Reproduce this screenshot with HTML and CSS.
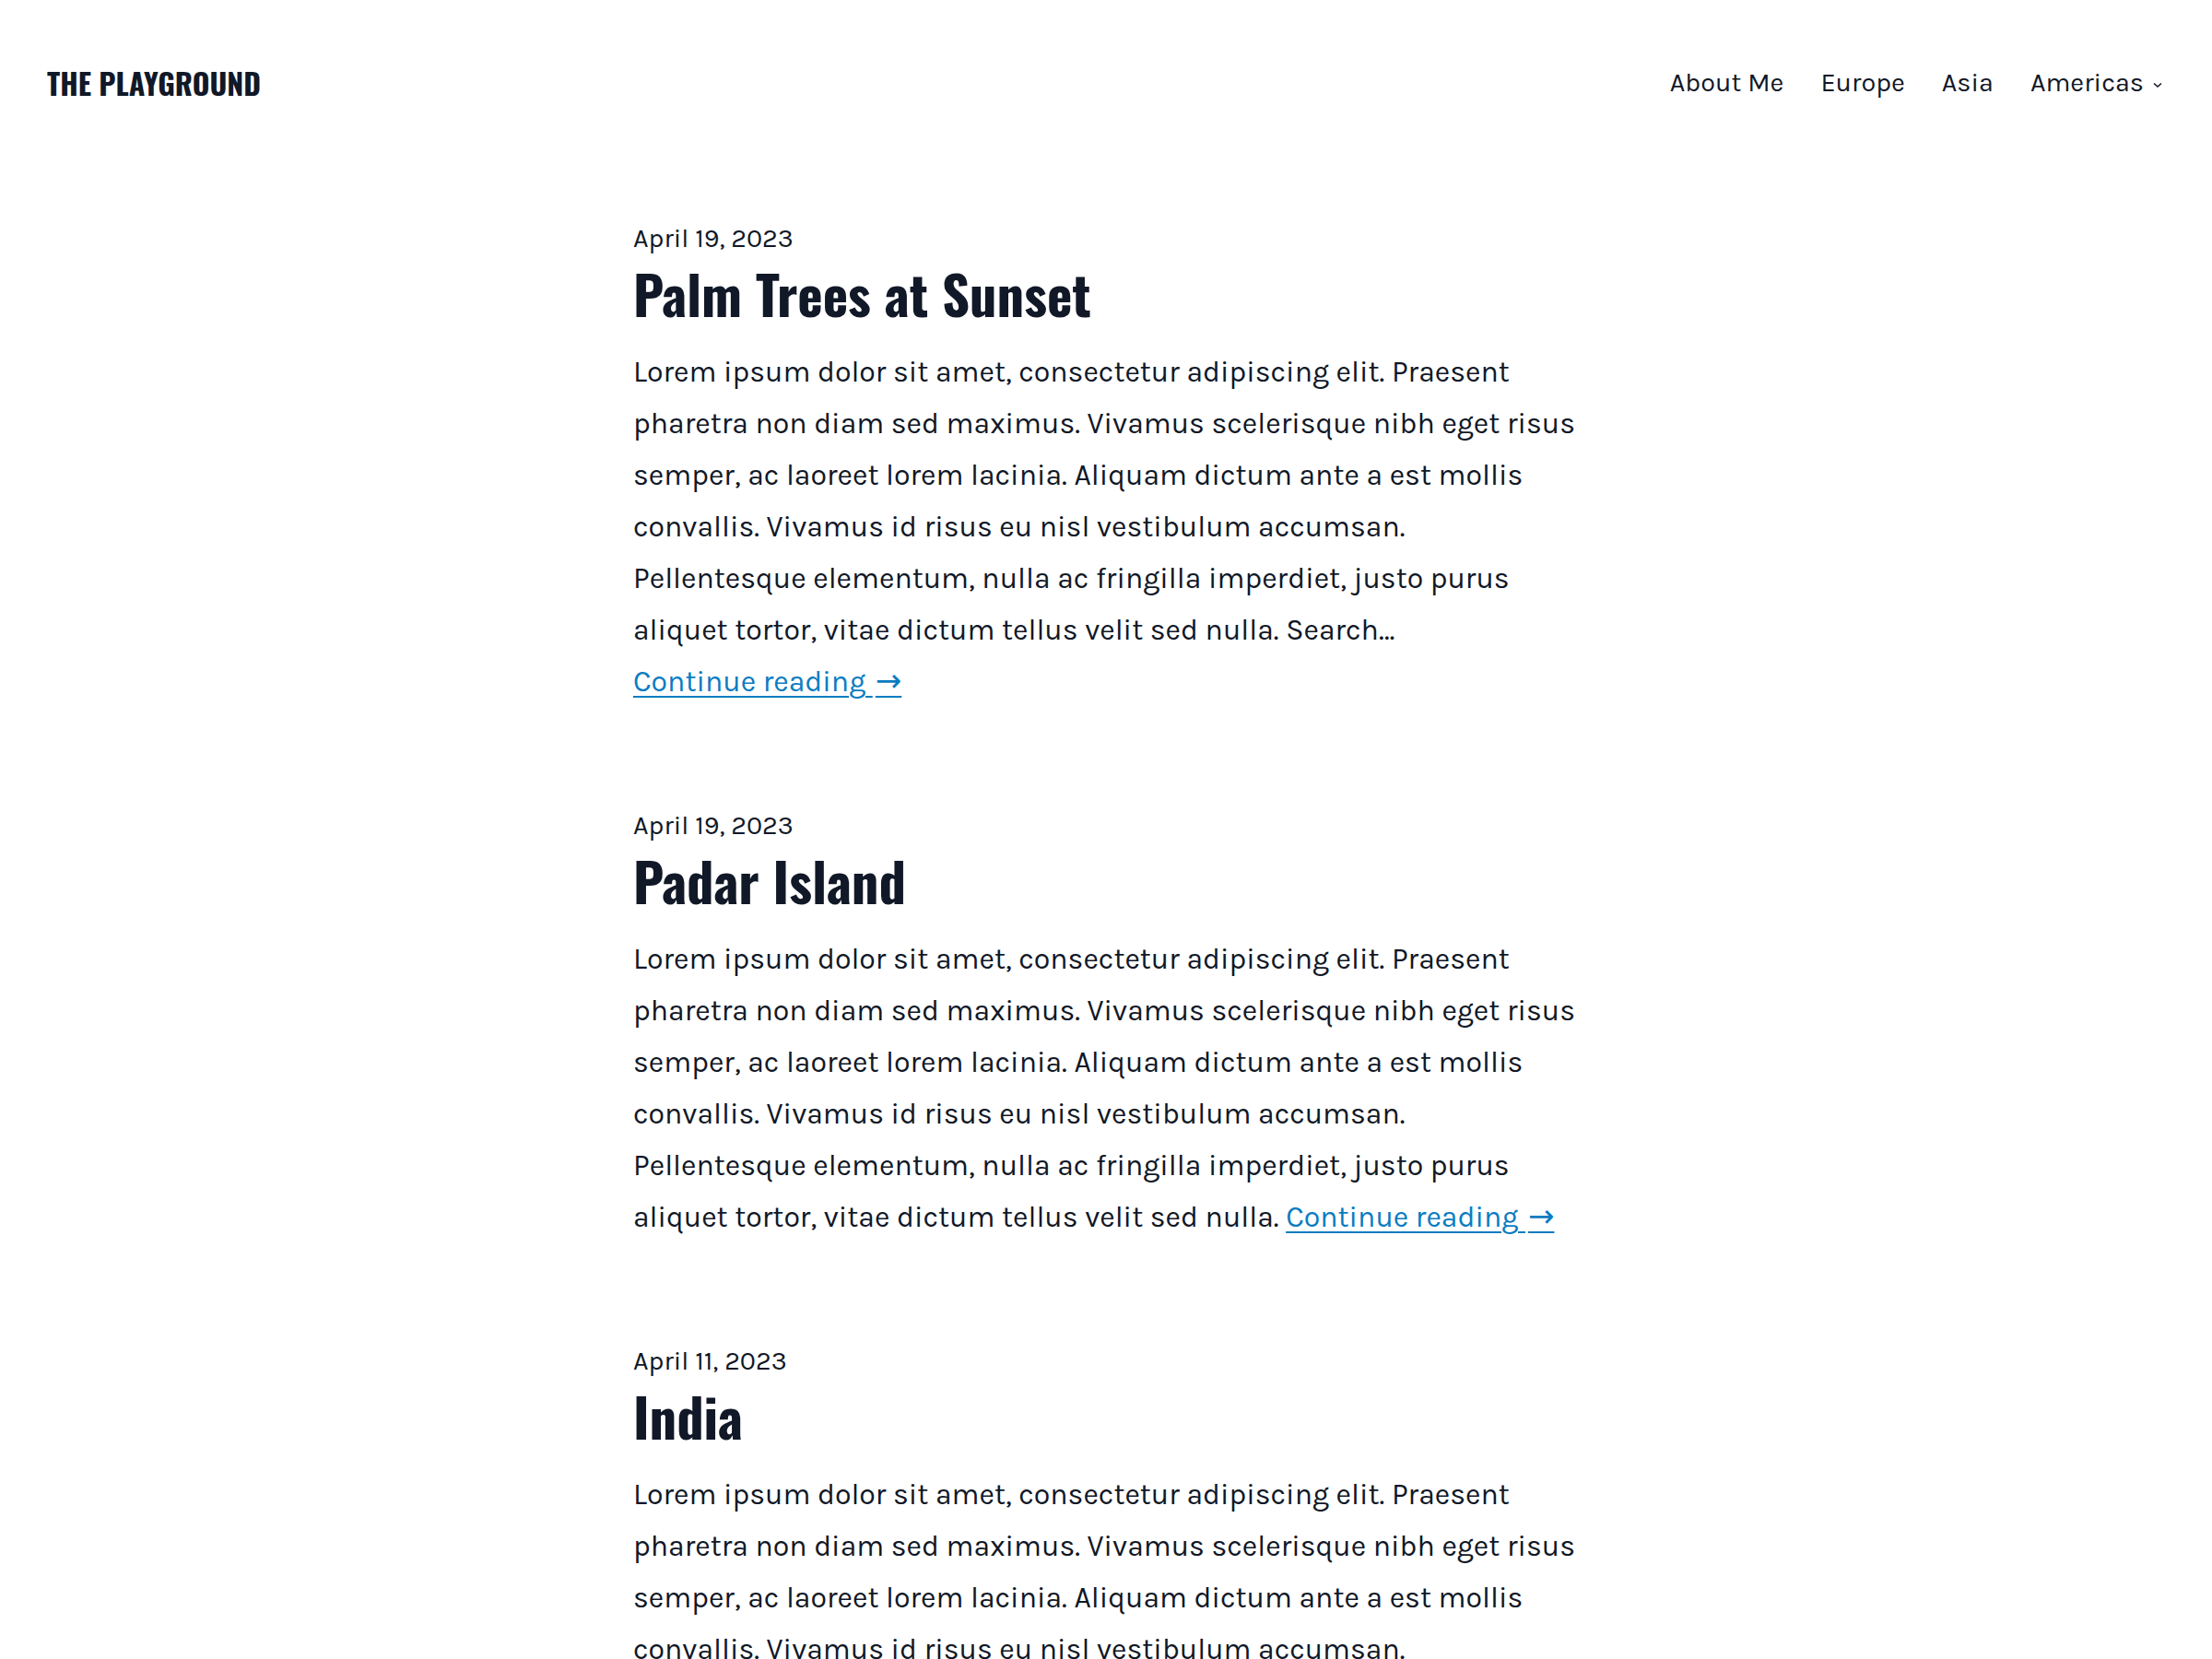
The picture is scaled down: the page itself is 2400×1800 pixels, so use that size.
FILE: index.html
```html
<!DOCTYPE html>
<html lang="en">
<head>
<meta charset="utf-8">
<title>The Playground</title>
<link rel="stylesheet" href="styles.css">
</head>
<body>
<header class="site-header">
  <a class="site-title" href="#">THE PLAYGROUND</a>
  <nav class="site-nav">
    <a href="#">About Me</a>
    <a href="#">Europe</a>
    <a href="#">Asia</a>
    <a href="#" class="has-sub">Americas<svg class="chev" viewBox="0 0 12 12" width="12" height="12" aria-hidden="true"><path d="M2 4.5 L6 8 L10 4.5" fill="none" stroke="currentColor" stroke-width="1.6"/></svg></a>
  </nav>
</header>
<main class="posts">
  <article class="post">
    <div class="post-date">April 19, 2023</div>
    <h2 class="post-title">Palm Trees at Sunset</h2>
    <p class="post-excerpt">Lorem ipsum dolor sit amet, consectetur adipiscing elit. Praesent<br>pharetra non diam sed maximus. Vivamus scelerisque nibh eget risus<br>semper, ac laoreet lorem lacinia. Aliquam dictum ante a est mollis<br>convallis. Vivamus id risus eu nisl vestibulum accumsan.<br>Pellentesque elementum, nulla ac fringilla imperdiet, justo purus<br>aliquet tortor, vitae dictum tellus velit sed nulla. Search…<br><a class="more" href="#">Continue reading <span class="arrow">→</span></a></p>
  </article>
  <article class="post">
    <div class="post-date">April 19, 2023</div>
    <h2 class="post-title">Padar Island</h2>
    <p class="post-excerpt">Lorem ipsum dolor sit amet, consectetur adipiscing elit. Praesent<br>pharetra non diam sed maximus. Vivamus scelerisque nibh eget risus<br>semper, ac laoreet lorem lacinia. Aliquam dictum ante a est mollis<br>convallis. Vivamus id risus eu nisl vestibulum accumsan.<br>Pellentesque elementum, nulla ac fringilla imperdiet, justo purus<br>aliquet tortor, vitae dictum tellus velit sed nulla. <a class="more" href="#">Continue reading <span class="arrow">→</span></a></p>
  </article>
  <article class="post">
    <div class="post-date">April 11, 2023</div>
    <h2 class="post-title">India</h2>
    <p class="post-excerpt">Lorem ipsum dolor sit amet, consectetur adipiscing elit. Praesent<br>pharetra non diam sed maximus. Vivamus scelerisque nibh eget risus<br>semper, ac laoreet lorem lacinia. Aliquam dictum ante a est mollis<br>convallis. Vivamus id risus eu nisl vestibulum accumsan.<br>Pellentesque elementum, nulla ac fringilla imperdiet, justo purus<br>aliquet tortor, vitae dictum tellus velit sed nulla. Search…<br><a class="more" href="#">Continue reading <span class="arrow">→</span></a></p>
  </article>
</main>
</body>
</html>
```
FILE: styles.css
```css
html, body {
  margin: 0;
  padding: 0;
  background: #ffffff;
}
body {
  color: #111827;
  font-family: Karla, Inter, "Open Sans", sans-serif;
}
a {
  color: inherit;
  text-decoration: none;
}
.site-header {
  height: 180px;
  padding: 0 53px 0 51px;
  display: flex;
  align-items: center;
  justify-content: space-between;
}
.site-title {
  font-family: Oswald, "Liberation Sans Narrow", "DejaVu Sans Condensed", sans-serif;
  font-weight: 700;
  font-size: 32px;
  line-height: 1;
  color: #111827;
}
.site-nav {
  display: flex;
  align-items: center;
  gap: 40px;
  font-size: 28.8px;
  line-height: 1;
}
.site-nav a {
  display: inline-flex;
  align-items: center;
}
.chev {
  margin-left: 9px;
  margin-top: 4px;
}
.posts {
  width: 1026px;
  margin: 0 auto;
  padding-top: 63px;
}
.post {
  margin-bottom: 112px;
}
.post-date {
  font-size: 28.8px;
  line-height: 32px;
}
.post-title {
  margin: 0 0 15px;
  font-family: Oswald, "Liberation Sans Narrow", "DejaVu Sans Condensed", sans-serif;
  font-weight: 700;
  font-size: 58.4px;
  line-height: 86px;
  color: #111827;
}
.post-excerpt {
  margin: 0;
  font-size: 32px;
  line-height: 56px;
}
.more {
  color: #0b7cc1;
  text-decoration: underline;
  text-decoration-thickness: 2px;
  text-underline-offset: 5px;
}
.arrow {
  font-family: "DejaVu Sans", sans-serif;
  font-size: 34px;
  line-height: 0;
  margin-left: 3px;
}
```
